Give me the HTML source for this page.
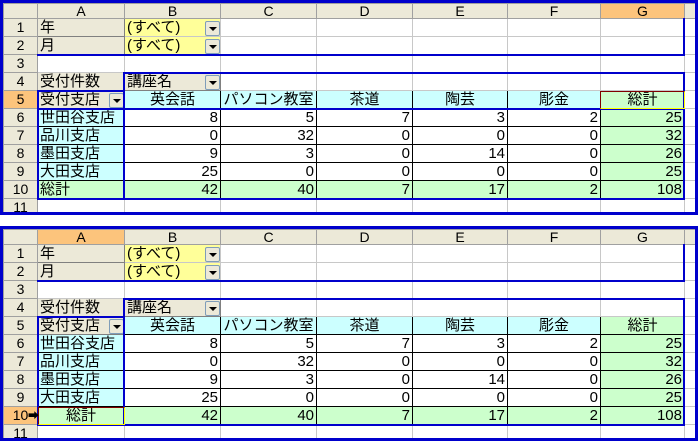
<!DOCTYPE html>
<html><head><meta charset="utf-8"><style>
body{margin:0;width:698px;height:441px;background:#fff;position:relative;overflow:hidden;font-family:"Liberation Sans","Noto Sans CJK JP",sans-serif;font-size:15px}
.p{position:absolute;left:0;width:692px;height:209px;border:3px solid #0000cc;overflow:hidden;background:#fff}
table{border-collapse:collapse;table-layout:fixed;position:absolute;left:0;top:0;width:701px}
td{border:1px solid #c8c8c8;padding:0 2px;height:17px;line-height:17px;white-space:nowrap;overflow:hidden;color:#000}
tr.h td{height:14px;line-height:14px;background:#ece9d8;text-align:center;border-color:#a0a0a0;font-size:14px}
td.r{background:#ece9d8;text-align:center;border-color:#a0a0a0;font-size:14px}
.o{background:#fcc47c!important}
.f{background:#ece9d8;border-color:#fff #808080 #808080 #fff!important}
.y{background:#ffff99}
.c{background:#ccffff}
.g{background:#ccffcc}
.n{text-align:right;border-color:#000}
.k{border-color:#000}
.ct{text-align:center}
.b{position:absolute;background:#0000cc}
.dd{position:absolute;width:13px;height:13px;background:#ece9d8;border:1px solid #7f9db9;border-radius:2px}
.dd::after{content:"";position:absolute;left:3px;top:5px;border-left:4px solid transparent;border-right:4px solid transparent;border-top:4px solid #000}
.s{position:absolute;border:1px solid #ffff00}
</style></head><body>

<!-- TOP PANEL -->
<div class="p" style="top:0">
<table>
<colgroup><col style="width:34px"><col style="width:87px"><col style="width:96px"><col style="width:96px"><col style="width:96px"><col style="width:95px"><col style="width:93px"><col style="width:84px"><col style="width:20px"></colgroup>
<tr class="h"><td></td><td>A</td><td>B</td><td>C</td><td>D</td><td>E</td><td>F</td><td class="o">G</td><td></td></tr>
<tr><td class="r">1</td><td class="f">年</td><td class="y">(すべて)</td><td></td><td></td><td></td><td></td><td></td><td></td></tr>
<tr><td class="r">2</td><td class="f">月</td><td class="y">(すべて)</td><td></td><td></td><td></td><td></td><td></td><td></td></tr>
<tr><td class="r">3</td><td></td><td></td><td></td><td></td><td></td><td></td><td></td><td></td></tr>
<tr><td class="r">4</td><td class="f">受付件数</td><td class="f">講座名</td><td></td><td></td><td></td><td></td><td></td><td></td></tr>
<tr><td class="r o">5</td><td class="f">受付支店</td><td class="c ct k">英会話</td><td class="c ct k">パソコン教室</td><td class="c ct k">茶道</td><td class="c ct k">陶芸</td><td class="c ct k">彫金</td><td class="g ct k">総計</td><td></td></tr>
<tr><td class="r">6</td><td class="c k">世田谷支店</td><td class="n">8</td><td class="n">5</td><td class="n">7</td><td class="n">3</td><td class="n">2</td><td class="n g">25</td><td></td></tr>
<tr><td class="r">7</td><td class="c k">品川支店</td><td class="n">0</td><td class="n">32</td><td class="n">0</td><td class="n">0</td><td class="n">0</td><td class="n g">32</td><td></td></tr>
<tr><td class="r">8</td><td class="c k">墨田支店</td><td class="n">9</td><td class="n">3</td><td class="n">0</td><td class="n">14</td><td class="n">0</td><td class="n g">26</td><td></td></tr>
<tr><td class="r">9</td><td class="c k">大田支店</td><td class="n">25</td><td class="n">0</td><td class="n">0</td><td class="n">0</td><td class="n">0</td><td class="n g">25</td><td></td></tr>
<tr><td class="r">10</td><td class="g k">総計</td><td class="n g">42</td><td class="n g">40</td><td class="n g">7</td><td class="n g">17</td><td class="n g">2</td><td class="n g">108</td><td></td></tr>
<tr><td class="r">11</td><td></td><td></td><td></td><td></td><td></td><td></td><td></td><td></td></tr>
</table>
<div class="dd" style="left:202px;top:18px"></div>
<div class="dd" style="left:202px;top:36px"></div>
<div class="dd" style="left:202px;top:72px"></div>
<div class="dd" style="left:106px;top:90px"></div>
<div class="b" style="left:34px;top:51px;width:648px;height:2px"></div>
<div class="b" style="left:680px;top:15px;width:2px;height:38px"></div>
<div class="b" style="left:120px;top:69px;width:562px;height:2px"></div>
<div class="b" style="left:120px;top:69px;width:2px;height:127px"></div>
<div class="b" style="left:34px;top:87px;width:88px;height:2px"></div>
<div class="b" style="left:34px;top:87px;width:2px;height:109px"></div>
<div class="b" style="left:34px;top:105px;width:648px;height:2px"></div>
<div class="b" style="left:34px;top:195px;width:648px;height:2px"></div>
<div class="b" style="left:680px;top:69px;width:2px;height:128px"></div>
<div class="s" style="left:597px;top:88px;width:83px;height:16px;border-color:#800000 #ffff00 #ffff00 #800000"></div>
</div>

<!-- BOTTOM PANEL -->
<div class="p" style="top:226px">
<table>
<colgroup><col style="width:34px"><col style="width:87px"><col style="width:96px"><col style="width:96px"><col style="width:96px"><col style="width:95px"><col style="width:93px"><col style="width:84px"><col style="width:20px"></colgroup>
<tr class="h"><td></td><td class="o">A</td><td>B</td><td>C</td><td>D</td><td>E</td><td>F</td><td>G</td><td></td></tr>
<tr><td class="r">1</td><td class="f">年</td><td class="y">(すべて)</td><td></td><td></td><td></td><td></td><td></td><td></td></tr>
<tr><td class="r">2</td><td class="f">月</td><td class="y">(すべて)</td><td></td><td></td><td></td><td></td><td></td><td></td></tr>
<tr><td class="r">3</td><td></td><td></td><td></td><td></td><td></td><td></td><td></td><td></td></tr>
<tr><td class="r">4</td><td class="f">受付件数</td><td class="f">講座名</td><td></td><td></td><td></td><td></td><td></td><td></td></tr>
<tr><td class="r">5</td><td class="f">受付支店</td><td class="c ct k">英会話</td><td class="c ct k">パソコン教室</td><td class="c ct k">茶道</td><td class="c ct k">陶芸</td><td class="c ct k">彫金</td><td class="g ct k">総計</td><td></td></tr>
<tr><td class="r">6</td><td class="c k">世田谷支店</td><td class="n">8</td><td class="n">5</td><td class="n">7</td><td class="n">3</td><td class="n">2</td><td class="n g">25</td><td></td></tr>
<tr><td class="r">7</td><td class="c k">品川支店</td><td class="n">0</td><td class="n">32</td><td class="n">0</td><td class="n">0</td><td class="n">0</td><td class="n g">32</td><td></td></tr>
<tr><td class="r">8</td><td class="c k">墨田支店</td><td class="n">9</td><td class="n">3</td><td class="n">0</td><td class="n">14</td><td class="n">0</td><td class="n g">26</td><td></td></tr>
<tr><td class="r">9</td><td class="c k">大田支店</td><td class="n">25</td><td class="n">0</td><td class="n">0</td><td class="n">0</td><td class="n">0</td><td class="n g">25</td><td></td></tr>
<tr><td class="r o">10</td><td class="g k ct">総計</td><td class="n g">42</td><td class="n g">40</td><td class="n g">7</td><td class="n g">17</td><td class="n g">2</td><td class="n g">108</td><td></td></tr>
<tr><td class="r">11</td><td></td><td></td><td></td><td></td><td></td><td></td><td></td><td></td></tr>
</table>
<div class="dd" style="left:202px;top:18px"></div>
<div class="dd" style="left:202px;top:36px"></div>
<div class="dd" style="left:202px;top:72px"></div>
<div class="dd" style="left:106px;top:90px"></div>
<div class="b" style="left:34px;top:51px;width:648px;height:2px"></div>
<div class="b" style="left:680px;top:15px;width:2px;height:38px"></div>
<div class="b" style="left:120px;top:69px;width:562px;height:2px"></div>
<div class="b" style="left:120px;top:69px;width:2px;height:127px"></div>
<div class="b" style="left:34px;top:87px;width:88px;height:2px"></div>
<div class="b" style="left:34px;top:87px;width:2px;height:109px"></div>
<div class="b" style="left:34px;top:195px;width:648px;height:2px"></div>
<div class="b" style="left:680px;top:69px;width:2px;height:128px"></div>
<div class="s" style="left:35px;top:178px;width:85px;height:16px;border-color:#800000 #ffff00 #ffff00 #800000"></div>
<div style="position:absolute;left:25px;top:178px;font-size:11px;font-weight:bold">➡</div>
</div>
</body></html>
